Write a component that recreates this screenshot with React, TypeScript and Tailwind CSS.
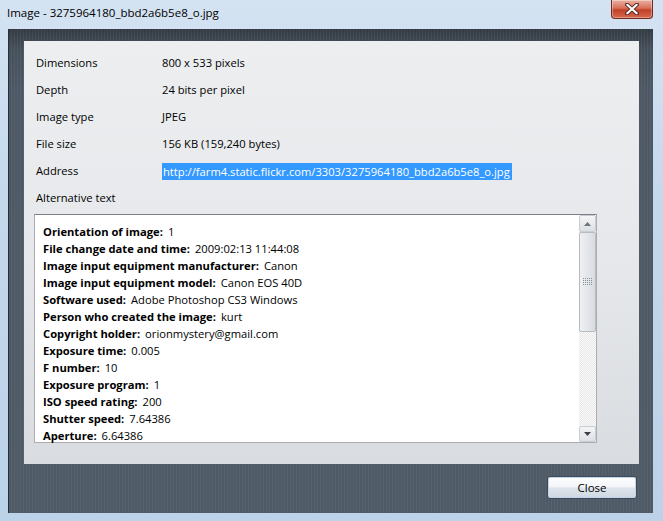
import React from "react";

const rows: [string, string][] = [
  ["Dimensions", "800 x 533 pixels"],
  ["Depth", "24 bits per pixel"],
  ["Image type", "JPEG"],
  ["File size", "156 KB (159,240 bytes)"],
];

const exif: [string, string][] = [
  ["Orientation of image:", "1"],
  ["File change date and time:", "2009:02:13 11:44:08"],
  ["Image input equipment manufacturer:", "Canon"],
  ["Image input equipment model:", "Canon EOS 40D"],
  ["Software used:", "Adobe Photoshop CS3 Windows"],
  ["Person who created the image:", "kurt"],
  ["Copyright holder:", "orionmystery@gmail.com"],
  ["Exposure time:", "0.005"],
  ["F number:", "10"],
  ["Exposure program:", "1"],
  ["ISO speed rating:", "200"],
  ["Shutter speed:", "7.64386"],
  ["Aperture:", "6.64386"],
];

export default function App() {
  return (
    <div
      className="w-[663px] h-[521px] overflow-hidden flex flex-col bg-[linear-gradient(180deg,#d4e3f2_0%,#c4d8ec_40%,#bcd2e8_100%)] text-[11.2px] text-black"
      style={{ fontFamily: '"Open Sans", "Noto Sans", sans-serif' }}
    >
      {/* Title bar */}
      <div className="h-[29px] flex items-start justify-between shrink-0">
        <div className="pl-[7px] pt-[5px] leading-[16px] text-[11.5px]">Image - 3275964180_bbd2a6b5e8_o.jpg</div>
        <div className="mr-[10px] w-[42px] h-[19px] rounded-b-[4px] border border-t-0 border-[#6e2a20] bg-[linear-gradient(180deg,#eab3a3_0%,#d86f58_45%,#c2402a_55%,#d4684c_100%)] flex items-center justify-center shadow-[inset_0_0_0_1px_rgba(255,255,255,0.35)]">
          <svg width="14" height="12" viewBox="0 0 14 12">
            <path d="M2 1.5 L12 10.5 M12 1.5 L2 10.5" stroke="#5a2b24" strokeWidth="4" strokeLinecap="round" />
            <path d="M2.3 1.8 L11.7 10.2 M11.7 1.8 L2.3 10.2" stroke="#ffffff" strokeWidth="2.2" strokeLinecap="round" />
          </svg>
        </div>
      </div>

      {/* Body */}
      <div className="flex pl-[8px] pr-[10px]">
        <div className="w-[645px] h-[484px] border-l border-[#26303a] bg-[linear-gradient(180deg,#333a42_0px,#46505b_20px,#4d5865_60px,#4f5a67_100%)] flex flex-col">
          <div className="h-[484px] w-full bg-[repeating-linear-gradient(90deg,rgba(255,255,255,0)_0px,rgba(255,255,255,0)_2px,rgba(255,255,255,0.05)_2px,rgba(255,255,255,0.05)_3px)] flex flex-col pt-[12px]">
            {/* Light panel */}
            <div className="ml-[15px] w-[615px] h-[423px] bg-[linear-gradient(180deg,#eceef0_0%,#e6e8eb_50%,#d9dce0_100%)] pt-[9px] flex flex-col">
              {rows.map(([k, v]) => (
                <div key={k} className="h-[27px] flex items-center">
                  <div className="w-[138px] pl-[12px]">{k}</div>
                  <div>{v}</div>
                </div>
              ))}
              <div className="h-[27px] flex items-center">
                <div className="w-[138px] pl-[12px]">Address</div>
                <div className="bg-[#3399ff] text-white leading-[17px] pl-[1px] pr-[2px]">
                  http://farm4.static.flickr.com/3303/3275964180_bbd2a6b5e8_o.jpg
                </div>
              </div>
              <div className="h-[27px] flex items-center">
                <div className="pl-[12px]">Alternative text</div>
              </div>
              {/* Textarea */}
              <div className="ml-[10px] mt-[2px] w-[563px] h-[229px] bg-white border border-[#abadb3] border-t-[#7a7e86] flex">
                <div className="flex-1 pl-[8px] pt-[8px] leading-[17px]">
                  {exif.map(([k, v]) => (
                    <div key={k} className="whitespace-nowrap">
                      <span className="font-bold">{k}</span>
                      <span className="ml-[5px]">{v}</span>
                    </div>
                  ))}
                </div>
                {/* Scrollbar */}
                <div className="w-[17px] flex flex-col bg-[repeating-conic-gradient(#e8e8e8_0%_25%,#fafafa_0%_50%)] bg-[length:2px_2px]">
                  <div className="h-[17px] border border-[#c9cdd2] rounded-[2px] bg-[linear-gradient(180deg,#f4f5f6,#dde0e4)] flex items-center justify-center">
                    <svg width="7" height="4" viewBox="0 0 7 4"><path d="M3.5 0 L7 4 L0 4 Z" fill="#6d7480" /></svg>
                  </div>
                  <div className="h-[100px] border border-[#b7bcc3] rounded-[2px] bg-[linear-gradient(90deg,#eef0f2,#e1e4e8_60%,#d8dbe0)] flex items-center justify-center">
                    <svg width="9" height="8" viewBox="0 0 9 8">
                      {[0, 2, 4, 6].map((y) =>
                        [0, 2, 4, 6, 8].map((x) => (
                          <rect key={`${x}-${y}`} x={x} y={y} width="1" height="1" fill="#8a9099" />
                        ))
                      )}
                    </svg>
                  </div>
                  <div className="flex-1" />
                  <div className="h-[16px] border border-[#c9cdd2] rounded-[2px] bg-[linear-gradient(180deg,#f4f5f6,#dde0e4)] flex items-center justify-center">
                    <svg width="7" height="4" viewBox="0 0 7 4"><path d="M0 0 L7 0 L3.5 4 Z" fill="#3c4148" /></svg>
                  </div>
                </div>
              </div>
            </div>
            {/* Close button */}
            <div className="flex justify-end pr-[16px] pt-[12px]">
              <div className="w-[90px] h-[23px] rounded-[3px] border border-[#3c4a5a] bg-[linear-gradient(180deg,#ffffff_0%,#f3f5f8_45%,#dde3ea_55%,#cfd8e2_100%)] shadow-[inset_0_0_0_1px_#c2d4e8] flex items-center justify-center text-[11.5px]">
                Close
              </div>
            </div>
          </div>
        </div>
      </div>
    </div>
  );
}
